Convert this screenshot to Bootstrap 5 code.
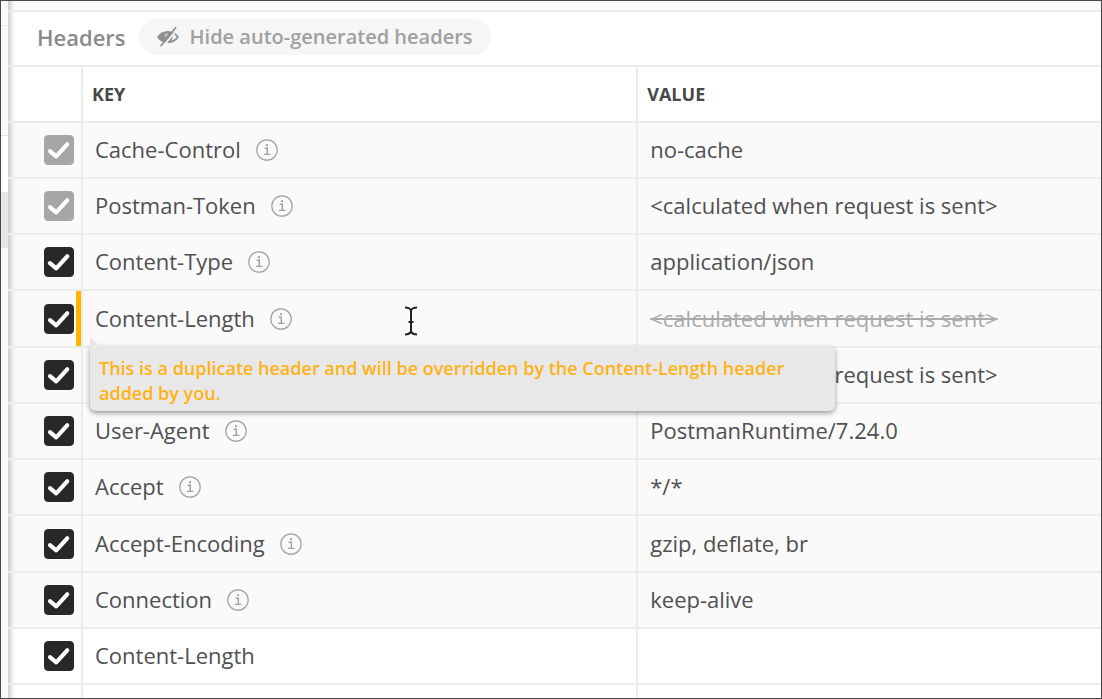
<!DOCTYPE html>
<html lang="en">
<head>
<meta charset="utf-8">
<meta name="viewport" content="width=device-width, initial-scale=1">
<title>Request headers</title>
<link href="https://cdn.jsdelivr.net/npm/bootstrap@5.3.0/dist/css/bootstrap.min.css" rel="stylesheet">
<style>
  body { font-family: "Open Sans", "Noto Sans", sans-serif; color: #505050; background: #fff; }
  .app-frame { height: 100vh; border: 1px solid #484648; }
  .side-strip { width: 7px; background: #fafafa; }
  .side-tabs { height: 25px; border-bottom: 1px solid #e8e8e8; }
  .side-search { height: 110px; border-bottom: 1px solid #e0e0e0; }
  .side-item { height: 56px; background: #fff; }
  .side-item.current { background: #e6e6e6; }
  .pane { background: #fff; box-shadow: inset 7px 0 5px -4px #ccc; }
  .pane-top { height: 11px; border-bottom: 2px solid #eaeaea; background: rgba(128,128,128,.04); }
  .pane-bar { height: 53px; padding-left: 29px; padding-bottom: 3px; gap: 13px; }
  .pane-title { font-size: 22px; font-weight: 600; color: #8a8a8a; }
  .btn-hide { height: 36px; padding: 0 18px 0 17px; gap: 10px; background: #f6f6f6; color: #a0a0a0; font-size: 20px; font-weight: 600; line-height: 36px; }
  .btn-hide:hover { background: #eee; color: #888; }

  .headers-table { table-layout: fixed; border-collapse: separate; border-spacing: 0; border-top: 2px solid #ececec; font-size: 22px; line-height: 30px; }
  .headers-table .col-check { width: 75px; }
  .headers-table .col-key { width: 50.8%; }
  .headers-table th, .headers-table td { height: 56px; padding: 0 12px 2px; border-bottom: 2px solid #ececec; border-right: 2px solid #ececec; vertical-align: middle; white-space: nowrap; }
  .headers-table th { padding: 0 9px; font-size: 18px; font-weight: 700; color: #484848; }
  .headers-table tr > :last-child { border-right: 0; }
  .headers-table tbody tr:nth-child(4n) td { height: 57px; }
  .headers-table tr.auto td { background: rgba(128,128,128,.04); }
  .headers-table td.check { padding: 0 7px 0 0; }
  .headers-table td.warn::after { content: ""; position: absolute; inset: 0 0 0 auto; width: 5px; background: #ffb400; }
  .key-line { gap: 15px; }
  .key-info { width: 22px; height: 22px; margin-top: 2px; }
  .struck { color: #aaa; text-decoration: line-through; }

  .form-check-input.tick { display: block; width: 30px; height: 30px; margin: 0 0 0 auto; border: 1px solid #c8c8c8; border-radius: 4px; background-color: #fff; }
  .form-check-input.tick:checked { border-color: #282828; background-color: #282828; background-size: 28px 28px;
    background-image: url("data:image/svg+xml,%3csvg xmlns='http://www.w3.org/2000/svg' viewBox='0 0 28 28'%3e%3cpath d='M5 15.2 11.2 20.3 22.2 8.3' fill='none' stroke='%23fff' stroke-width='4.2' stroke-linecap='round' stroke-linejoin='round'/%3e%3c/svg%3e"); }
  .form-check-input.tick:disabled { opacity: 1; border-color: #a6a6a6; background-color: #a6a6a6; }
  .form-check-input.tick:disabled ~ label { opacity: 1; }

  .dup-tip { position: absolute; z-index: 5; top: 100%; left: 7px; width: 745px; padding: 10px 9px 5px; border-radius: 0 6px 6px 6px; background: #e8e8e8; color: #ffb215; font-size: 18px; font-weight: 600; line-height: 25px; white-space: normal; box-shadow: 0 2px 5px rgba(0,0,0,.4); }
  .dup-tip::before { content: ""; position: absolute; top: -9px; left: 0; border-left: 10px solid #e8e8e8; border-top: 9px solid transparent; }
  .text-cursor { position: absolute; left: 318px; top: 14px; }
</style>
</head>
<body>
<svg class="d-none" xmlns="http://www.w3.org/2000/svg">
  <symbol id="info" viewBox="0 0 22 22">
    <circle cx="11" cy="11" r="10.2" fill="none" stroke="#a0a0a0" stroke-width="1.2"/>
    <path d="M8.6 9.2h2.7v6M8 15.4h6.4" fill="none" stroke="#a0a0a0" stroke-width="1.4"/>
    <circle cx="11" cy="6.2" r="1.1" fill="#a0a0a0"/>
  </symbol>
</svg>
<div class="app-frame d-flex overflow-hidden">
  <aside class="side-strip flex-shrink-0">
    <div class="side-tabs"></div>
    <div class="side-search"></div>
    <div class="side-item"></div>
    <div class="side-item current"></div>
  </aside>
  <main class="pane flex-grow-1 overflow-hidden">
    <div class="pane-top"></div>
    <div class="pane-bar d-flex align-items-center">
      <h1 class="pane-title m-0">Headers</h1>
      <button type="button" class="btn btn-hide rounded-pill border-0 d-flex align-items-center">
        <svg width="24" height="22" viewBox="0 0 24 22" aria-hidden="true">
          <path d="M1 11C3.500 7 7.300 5 12 5s8.500 2 11 6c-2.500 4-6.300 6-11 6S3.500 15 1 11Z" fill="#909090"/>
          <path d="M12 7c3.500 0 6.800 1.300 8.800 4-2 2.700-5.300 4-8.800 4Z" fill="#f6f6f6"/>
          <circle cx="12" cy="11" r="4.600" fill="#909090"/>
          <path d="M9.200 10.500a3 3 0 0 1 2.600-2.500" fill="none" stroke="#f6f6f6" stroke-width="1.200"/>
          <path d="M6 21.500 22 2.500" stroke="#f6f6f6" stroke-width="1.800"/>
          <path d="M4.500 20.200 20 1.200" stroke="#909090" stroke-width="1.800"/>
        </svg>
        <span>Hide auto-generated headers</span>
      </button>
    </div>
    <table class="headers-table w-100 m-0">
      <colgroup><col class="col-check"><col class="col-key"><col></colgroup>
      <thead>
        <tr><th aria-label="Enabled"></th><th scope="col">KEY</th><th scope="col">VALUE</th></tr>
      </thead>
      <tbody>
        <tr class="auto">
          <td class="check"><input class="form-check-input tick" type="checkbox" id="h1" checked disabled></td>
          <td><div class="key-line d-flex align-items-center"><label for="h1">Cache-Control</label><svg class="key-info"><use href="#info"/></svg></div></td>
          <td>no-cache</td>
        </tr>
        <tr class="auto">
          <td class="check"><input class="form-check-input tick" type="checkbox" id="h2" checked disabled></td>
          <td><div class="key-line d-flex align-items-center"><label for="h2">Postman-Token</label><svg class="key-info"><use href="#info"/></svg></div></td>
          <td>&lt;calculated when request is sent&gt;</td>
        </tr>
        <tr class="auto">
          <td class="check"><input class="form-check-input tick" type="checkbox" id="h3" checked></td>
          <td><div class="key-line d-flex align-items-center"><label for="h3">Content-Type</label><svg class="key-info"><use href="#info"/></svg></div></td>
          <td>application/json</td>
        </tr>
        <tr class="auto">
          <td class="check warn position-relative"><input class="form-check-input tick" type="checkbox" id="h4" checked aria-describedby="dup"></td>
          <td class="position-relative">
            <div class="key-line d-flex align-items-center"><label for="h4">Content-Length</label><svg class="key-info"><use href="#info"/></svg></div>
            <svg class="text-cursor" width="20" height="32" viewBox="0 0 20 32" aria-hidden="true">
              <path d="M4 2.500c3 0 5 .8 6 3 1-2.200 3-3 6-3M10 5v22M4 29.500c3 0 5-.8 6-3 1 2.200 3 3 6 3M7.500 17h5" fill="none" stroke="#fff" stroke-width="4"/>
              <path d="M4 2.500c3 0 5 .8 6 3 1-2.200 3-3 6-3M10 5v22M4 29.500c3 0 5-.8 6-3 1 2.200 3 3 6 3M7.500 17h5" fill="none" stroke="#222" stroke-width="2"/>
            </svg>
            <div class="dup-tip" role="tooltip" id="dup">This is a duplicate header and will be overridden by the Content-Length header added by you.</div>
          </td>
          <td><span class="struck">&lt;calculated when request is sent&gt;</span></td>
        </tr>
        <tr class="auto">
          <td class="check"><input class="form-check-input tick" type="checkbox" id="h5" checked aria-label="Header enabled"></td>
          <td></td>
          <td>&lt;calculated when request is sent&gt;</td>
        </tr>
        <tr class="auto">
          <td class="check"><input class="form-check-input tick" type="checkbox" id="h6" checked></td>
          <td><div class="key-line d-flex align-items-center"><label for="h6">User-Agent</label><svg class="key-info"><use href="#info"/></svg></div></td>
          <td>PostmanRuntime/7.24.0</td>
        </tr>
        <tr class="auto">
          <td class="check"><input class="form-check-input tick" type="checkbox" id="h7" checked></td>
          <td><div class="key-line d-flex align-items-center"><label for="h7">Accept</label><svg class="key-info"><use href="#info"/></svg></div></td>
          <td>*/*</td>
        </tr>
        <tr class="auto">
          <td class="check"><input class="form-check-input tick" type="checkbox" id="h8" checked></td>
          <td><div class="key-line d-flex align-items-center"><label for="h8">Accept-Encoding</label><svg class="key-info"><use href="#info"/></svg></div></td>
          <td>gzip, deflate, br</td>
        </tr>
        <tr class="auto">
          <td class="check"><input class="form-check-input tick" type="checkbox" id="h9" checked></td>
          <td><div class="key-line d-flex align-items-center"><label for="h9">Connection</label><svg class="key-info"><use href="#info"/></svg></div></td>
          <td>keep-alive</td>
        </tr>
        <tr>
          <td class="check"><input class="form-check-input tick" type="checkbox" id="h10" checked></td>
          <td><label for="h10">Content-Length</label></td>
          <td></td>
        </tr>
        <tr>
          <td></td>
          <td></td>
          <td></td>
        </tr>
      </tbody>
    </table>
  </main>
</div>
<script src="https://cdn.jsdelivr.net/npm/bootstrap@5.3.0/dist/js/bootstrap.bundle.min.js"></script>
</body>
</html>
